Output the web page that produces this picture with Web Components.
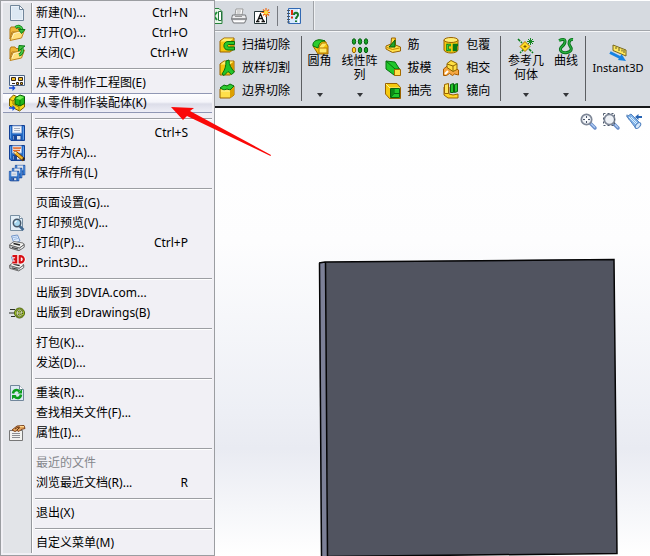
<!DOCTYPE html>
<html lang="zh-CN">
<head>
<meta charset="utf-8">
<title>文件菜单</title>
<style>
html, body { margin: 0; height: 100%; }
body { font: 12px/20px "Noto Sans", "Noto Sans CJK SC", sans-serif; color: #000; overflow: hidden; }
</style>
</head>
<body>
<cad-app></cad-app>
<script>
const save = '<path d="M.5.5h15v15H2l-1.500-1.500z" fill="#2269c4" stroke="#123f94"/><path d="M3.500 1h9v7h-9z" fill="#f4f6fa" stroke="#9eb6dc"/><path d="M5 3.500h6M5 5.500h6" stroke="#a8b0c0"/><path d="M4 10.500h8V15H4z" fill="#dfe4ea" stroke="#17479c"/><path d="M5 11h3v4H5z" fill="#17479c"/><path d="M1.500 1.500v12M14.500 1.500v13" stroke="#5f9de6"/>';
const printer = '<path d="M2.500 1l6-1 2.500 6-6 2.500z" fill="#dcebff" stroke="#7396c8"/><path d="M4 2.500l4-.5M5 4.500l4-1" stroke="#9dbbe2"/><path d="M.8 9.500L5 6.500l9 1.500 1.200 1.500-4.500 3.500-9.900-2z" fill="#f3f3f1" stroke="#777"/><path d="M.8 10v3L10 15.700l5.200-3.500V9.500L10.500 13z" fill="#c3c5c8" stroke="#666"/><path d="M4.500 8.500l6.500 1.500" stroke="#222" stroke-width="1.500"/><path d="M3 12.500l6 1.500" stroke="#333"/><path d="M11.500 13.500l3-2" stroke="#fff"/>';
const folder = '<path d="M1 4l1-2h4l1 1.500h6V7H3L1 14z" fill="#eeb63a" stroke="#b57a16"/><path d="M1 15.500L4 7.500l5-.500 6.500-2-3 8z" fill="#ffdf7b" stroke="#bf851d"/><path d="M3 13l2-4.500 8-2" stroke="#fff5c6" fill="none"/>';
const cube = '<path d="M1 4l4-3h10v11l-4 3H1z" fill="#f5c60c" stroke="#9a6200"/><path d="M1.500 4.500L5 1.500h9.500L11 4.500z" fill="#ffee70"/><path d="M11 4.500V15l3.500-3V2z" fill="#d99a00"/>';
const glass = '<path d="M10.500 10.500l4.500 4.500" stroke="#6a8fcb" stroke-width="3.500" stroke-linecap="round"/><path d="M11 10.700l4 4" stroke="#b8d2f6" stroke-width="1.200"/><circle cx="6.500" cy="6.500" r="5.200" fill="#eef1f6" stroke="#7e8797" stroke-width="1.700"/>';
const ICONS = {
  page: '<path d="M1.500.5h9l4 4v11h-13z" fill="#eaf1f8" stroke="#71869b"/><path d="M3 2h7v3h3v9H3z" fill="#dce8f3"/><path d="M10.500.5v4h4z" fill="#fff" stroke="#71869b"/>',
  open: folder + '<path d="M6.500 2.500C9 .500 12 1 13 4.500" fill="none" stroke="#0a7b17" stroke-width="3"/><path d="M6.500 2.500C9 .500 12 1 13 4.500" fill="none" stroke="#4cd34a" stroke-width="1.500"/><path d="M9.500 4.500h6.500l-3.500 4z" fill="#36ba37" stroke="#0a7b17"/>',
  close: folder + '<path d="M10 10c3-1 4-3 3-7" fill="none" stroke="#0a7b17" stroke-width="3"/><path d="M10 10c3-1 4-3 3-7" fill="none" stroke="#54d44d" stroke-width="1.300"/><path d="M9.500 6l.5-5.500 6 .500z" fill="#42c43b" stroke="#0a7b17"/>',
  drawing: '<path d="M.5.5h15v10H.5z" fill="#f8fbff" stroke="#4c6485"/><path d="M2.500 2.500h4v3h-4zM9.500 2.500h4v3h-4zM7.500 7.500h2v2h-2zM11.500 7.500h2v2h-2z" fill="#f2bf20" stroke="#38291a"/><path d="M3 8.500h3" stroke="#38291a"/><path d="M0 13h5" stroke="#154bd6" stroke-width="1.500"/><path d="M3.500 10v6l3-3z" fill="#154bd6"/>',
  assembly: '<path d="M.5 4l4-4 3 1.500v5l3 1.500 5-2v6l-5 4-10-5z" fill="#f7d51b" stroke="#775d00"/><path d="M1 4.500l3 1.500v3l6 3v3M4 6l3-3" fill="none" stroke="#9a7600"/><path d="M6 3l5-3 4.500 1.500v7L11 11 6 9z" fill="#22b51c" stroke="#075e06"/><path d="M6.500 3.300L11 .7l4 1.300-4 2.800z" fill="#78ef57"/><path d="M11 5v5.500" stroke="#087208"/><path d="M0 13h5" stroke="#154bd6" stroke-width="1.500"/><path d="M3.500 10v6l3-3z" fill="#154bd6"/>',
  save,
  saveas: save + '<path d="M4 3h8M4 5.500h7" stroke="#ed6a22" stroke-width="1.300"/><path d="M5 7l2.500-.5 8 7-1.500 2.500-8-6.500z" fill="#f5b826" stroke="#6e3c0b"/><path d="M5 7l2.500-.5-1.500 3z" fill="#fff0bd"/><path d="M13 14l1 2 2-2.500-1-1z" fill="#25222a"/>',
  saveall: '<g transform="translate(6 0) scale(.64)">' + save + '</g><g transform="translate(3 3) scale(.64)">' + save + '</g><g transform="translate(0 6) scale(.64)">' + save + '</g>',
  preview: '<path d="M1.500.5h9l3 3v12h-12z" fill="#e2eef7" stroke="#788fa3"/><path d="M10.500.5v3h3" fill="#fff" stroke="#788fa3"/><path d="M10.500 11l4 4" stroke="#426991" stroke-width="2.500"/><circle cx="8" cy="8" r="3.700" fill="#a6d7ef" stroke="#455768" stroke-width="1.500"/><path d="M6 8a2 2 0 0 1 2-2" fill="none" stroke="#fff"/>',
  printer,
  print3d: '<g transform="translate(0 1) scale(.97 .95)">' + printer + '</g><path d="M3.500 1.500h4v6h-4M4.500 4.500h3M10.500 1.500v6c6 .5 6-6.500 0-6z" fill="none" stroke="#fff" stroke-width="3.500"/><path d="M3.500 1.200h3.700v6.300H3.300M4.500 4.300h2.500M10.700 1.200v6.300c5.500.5 5.500-6.800 0-6.300z" fill="none" stroke="#d60e13" stroke-width="2.200"/>',
  edraw: '<path d="M1 4.500h5M0 8h5M2 11.500h4" stroke="#2b302a"/><circle cx="10.500" cy="8" r="5" fill="#a8c929" stroke="#49600e"/><path d="M8 8h5c0-4-5-4-5 0s4 3.500 5 1.500" fill="none" stroke="#46591a" stroke-width="2.200"/><path d="M8 8h5c0-4-5-4-5 0s4 3.500 5 1.500" fill="none" stroke="#f3f8c8"/>',
  reload: '<path d="M1.500.5h9l4 4v11h-13z" fill="#dce9f3" stroke="#71869b"/><path d="M10.500.5v4h4" fill="#fff" stroke="#71869b"/><path d="M4 8.500C4.500 5 8 4 10.500 6.500M12 9.500c-.5 4-4.500 4.500-6.500 2" fill="none" stroke="#0b9e1c" stroke-width="2.500"/><path d="M8.500 8.500H13V4zM7.500 10H3v4.500z" fill="#0b9e1c"/>',
  props: '<path d="M.5 5.500h13v10H.5z" fill="#f2f2ef" stroke="#777"/><path d="M3 8.500h8M3 10.500h8M3 12.500h8" stroke="#8b8d91"/><path d="M3 5l5-4 7-.5 1 3-4 1-2 2-2-1-2 1z" fill="#e6a65c" stroke="#7b421c"/><path d="M6 4l3-2 2 1M8 5l2-2" fill="none" stroke="#633113"/><path d="M11 1.500h4" stroke="#ffda92"/>',
  excel: '<path d="M1 .5h10l3 3v12H1z" fill="#e6f6e8" stroke="#26813a"/><path d="M10.500 3.500h3v9h-3z" fill="#fff" stroke="#23733a"/><path d="M3 4l6 8M9 4l-6 8" stroke="#1b8f35" stroke-width="2"/>',
  printPlain: '<path d="M4 7L5 1h7l-1 6z" fill="#fff" stroke="#999"/><path d="M6 3h4M5.500 5h4" stroke="#aaa"/><path d="M1.500 7h13l1 4-2 4h-11l-2-4z" fill="#eeeef0" stroke="#77797c"/><path d="M1 11h14" stroke="#77797c" stroke-width="1.500"/><path d="M4 8.500h7" stroke="#999"/><path d="M3 13.500h10" stroke="#fff"/>',
  note: '<path d="M.5 3.500h12v12H.5z" fill="#fff" stroke="#26373a"/><path d="M2 13.500h3.500M7.500 13.500H11M3.500 13l3-7 3 7M5 10.500h4" fill="none" stroke="#111" stroke-width="1.300"/><path d="M12 0v9M7.500 4.500H16M9 1.500l6 6M15 1.500l-6 6" stroke="#ed6c17" stroke-width="1.200"/><circle cx="12" cy="4.500" r="2" fill="#ffe03f"/>',
  help: '<path d="M2.500.5h12v15h-12z" fill="#d8eafe" stroke="#3269b3"/><path d="M12.500 1v14" stroke="#fff"/><path d="M1 2.500h3M1 5.500h3M1 8.500h3M1 11.500h3M1 14h3" stroke="#4c545d"/><path d="M6 2v5M6 8.500v2" stroke="#e32c13" stroke-width="2"/><path d="M8 7c0-3 4-3 4 0 0 2-2 1.500-2 4M10 12.500v1.500" fill="none" stroke="#17772a" stroke-width="2"/>',
  sweep: cube + '<path d="M15.500 4.500H9c-5.500 0-5.500 8.500 0 8.500h6.500v-3h-5.500c-2 0-2-2.500 0-2.500h5.500z" fill="#29c92c" stroke="#08700e"/>',
  loft: cube + '<path d="M7 1l3-1c0 5 2 8 5.500 12l-3 2.500-3.500-3-4 4-2-1.500c3-4 4-8 4-13z" fill="#22c42a" stroke="#08700e"/>',
  boundary: '<path d="M1 6l4-3h10v9l-4 3H1z" fill="#ffe04a" stroke="#9a6200"/><path d="M11 7v8l4-3V4z" fill="#dda000"/><path d="M1 5l4-3 3 1 3-2 4 2-4 4-3-1-3 1z" fill="#2dcc30" stroke="#08700e"/><path d="M2 8h9" stroke="#fff39a"/>',
  fillet: '<path d="M1 8l5-6 7 1 3 5v8H6z" fill="#f6c50b" stroke="#9a6200"/><path d="M7 15V9l3-4h5M7 10h8v5H7" fill="#ffe867" stroke="#bb7c00"/><path d="M1 8c-1-5 5-8 12-5-4 0-6 2-7 7z" fill="#2ccc2d" stroke="#08700e"/>',
  pattern: '<g fill="#16a524" stroke="#065e11"><ellipse cx="2" cy="3.500" rx="1.700" ry="2.800"/><ellipse cx="8" cy="3.500" rx="1.700" ry="2.800"/><ellipse cx="14" cy="3.500" rx="1.700" ry="2.800"/><ellipse cx="8" cy="12" rx="1.700" ry="2.800"/><ellipse cx="14" cy="12" rx="1.700" ry="2.800"/></g><ellipse cx="2" cy="12" rx="1.700" ry="2.800" fill="#ffd62a" stroke="#9b6400"/>',
  rib: '<path d="M6.500 1h4v7l5 2v4l-8 1.500L1 12V9l5-2z" fill="#ffe04a" stroke="#9a6200"/><path d="M2 10.500l5.500 2 7-1.500M10 1v8" stroke="#c88600" fill="none"/><path d="M10 3v7H4z" fill="#21a82b" stroke="#075c0e"/>',
  draft: '<path d="M1 1l9 1 5 8v5h-6L1 9z" fill="#20c82b" stroke="#08700e"/><path d="M1 1l9 8v6M10 9h5" fill="none" stroke="#08700e"/><path d="M9.500 9.500h6v6h-6z" fill="#ffe04a" stroke="#a66b00"/>',
  shell: '<path d="M.5.500h11.500l3.500 4v11H4.500L.5 11z" fill="#f5c90e" stroke="#9a6200"/><path d="M1 1l4 4h10" stroke="#fff392" fill="none"/><path d="M5.500 5.500h9v9h-9z" fill="#21c92c" stroke="#07620e"/><path d="M6 14l3-3.500h5.500M9 10.500V6" stroke="#08670f" fill="none"/><path d="M6 6h3v4.500L6 14z" fill="#0a8b16"/>',
  wrap: '<path d="M1 3v10c1 4 13 4 14 0V3z" fill="#f5c90e" stroke="#9a6200"/><ellipse cx="8" cy="3" rx="7" ry="2.500" fill="#ffed72" stroke="#9a6200"/><path d="M8 8H4.500v5H8M15 8h-4v5h2V9" fill="none" stroke="#0a7915" stroke-width="2.500"/><path d="M8 8H4.500v5H8" fill="none" stroke="#38d33c"/>',
  intersect: '<path d="M.5 9l5-4 10 5v5l-4-1-2 1.500-3-2-3 2h-3z" fill="#f5a642" stroke="#a95b00"/><path d="M4 3.500l4-3 6 3v6l-4 2-6-4z" fill="#ffdf43" stroke="#8d6500"/><path d="M4 4l6 2v5M10 6l4-2" fill="none" stroke="#8d6500"/><path d="M2 14l3-3" stroke="#fff" stroke-width="2"/>',
  mirror: '<path d="M1 4h5v7l4 1 5-1v4H5l-4-3z" fill="#ffd724" stroke="#9a6200"/><path d="M1.500 1.500l4-1v10h-4z" fill="#ffe85b" stroke="#9a6200"/><path d="M7.500 1.500l3-1v9h-3zM11.500 1.500l3-1v8l-3 1z" fill="#21c32b" stroke="#07620e"/>',
  reference: '<path d="M0 1l4 4M11 11l4 4M6 11l-4 4" stroke="#087c18" stroke-width="1.500" stroke-dasharray="3 1"/><path d="M7 3.500l5 5-5 5-5-5z" fill="#ffdc24" stroke="#ad7200"/><path d="M7 7v3M5.500 8.500h3" stroke="#7a5500"/><path d="M12.500 0v7M9 3.500h7M10 1l5 5M15 1l-5 5" stroke="#158522"/>',
  curve: '<path d="M1 2.500C9-1 8 5 4 8.500s0 7 5 6 5-4 3-6.500-1-7 3-6.500" fill="none" stroke="#08701b" stroke-width="3"/><path d="M1 2.500C9-1 8 5 4 8.500s0 7 5 6 5-4 3-6.500-1-7 3-6.500" fill="none" stroke="#2cb442" stroke-width="1.200"/>',
  instant: '<path d="M3 0l13 5v6L3 5.500z" fill="#ffe95f" stroke="#77671c"/><path d="M6 2v2M9 3v3M12 4.500v2M14 5v3" stroke="#5f5723"/><path d="M0 7.500l10 5" stroke="#1483e5" stroke-width="3"/><path d="M11.500 9l4.500 7-8-1z" fill="#1483e5"/>',
  fit: glass + '<path d="M6.500 3v7M3 6.500h7" stroke="#485468"/><path d="M5 5h3v3H5z" fill="#fff"/>',
  area: glass + '<path d="M.5.5h11v12H.5z" fill="none" stroke="#505d70" stroke-dasharray="2 2"/>',
  previous: '<path d="M1 1l3 5-1 1-3-4z" fill="#7a9ac1"/><path d="M1 3.500l4-2.500 9 9-4 5.500z" fill="#80b2e8" stroke="#5585c2"/><path d="M3 4l8 8M5 4l7 7" stroke="#d9efff"/><ellipse cx="12" cy="12.500" rx="2" ry="3.500" transform="rotate(40 12 12.500)" fill="#d5e8fb" stroke="#5585c2"/><path d="M11 4h5" stroke="#2865b4" stroke-width="2"/><path d="M12.500 1v6L9 4z" fill="#2865b4"/>'
};

function define(name, css, html, setup) {
  const template = document.createElement('template');
  template.innerHTML = '<style>' + css + '</style>' + html;
  customElements.define(name, class extends HTMLElement {
    connectedCallback() {
      if (this.shadowRoot) return;
      const root = this.attachShadow({ mode: 'open' });
      root.append(template.content.cloneNode(true));
      if (setup) setup(this, root);
    }
  });
}
const reset = 'button{font:inherit;color:inherit;background:none;border:0;margin:0;padding:0;text-align:left;white-space:nowrap}';

define('ui-icon', ':host{display:block;flex:none;width:16px;height:16px}svg{display:block;overflow:visible}',
  '<svg width="16" height="16" viewBox="0 0 16 16" aria-hidden="true"></svg>',
  (host, root) => { root.querySelector('svg').innerHTML = ICONS[host.getAttribute('name')] || ''; });

define('menu-row', reset + `
:host{display:block}
button{display:grid;grid-template-columns:33px 1fr auto;align-items:center;width:100%;height:20px;padding-right:24px;box-sizing:border-box}
ui-icon{margin-left:6px}
button:disabled{color:#85878c}
:host([active]) button{background:linear-gradient(#fff,#f4f4fa 45%,#dcdde9 55%,#f0f0f7);box-shadow:inset 0 1px #9097b4,inset 0 -1px #9097b4}`,
  '<button role="menuitem"><span class="icon"></span><span><slot></slot></span><span class="key"></span></button>',
  (host, root) => {
    const name = host.getAttribute('icon');
    if (name) root.querySelector('.icon').innerHTML = '<ui-icon name="' + name + '"></ui-icon>';
    root.querySelector('.key').textContent = host.getAttribute('key') || '';
    root.querySelector('button').disabled = host.hasAttribute('disabled');
  });

define('menu-line', ':host{display:block;height:10px;padding:5px 0 0 32px;box-sizing:border-box}hr{margin:0;border:0;height:1px;background:#9c9ea2;border-bottom:1px solid #fff}', '<hr>');

define('file-menu', `
:host{display:block;flex:none;width:215px;box-sizing:border-box;padding:2px;border:1px solid #9b9da1;background:#f1f0f5;align-self:flex-start}
nav{background:linear-gradient(90deg,#e2e4e8 28px,#96989d 28px,#96989d 29px,#fff 29px,#fff 30px,#f1f0f5 30px)}`,
  `<nav role="menu" aria-label="文件">
<menu-row icon="page" key="Ctrl+N">新建(N)...</menu-row><menu-row icon="open" key="Ctrl+O">打开(O)...</menu-row><menu-row icon="close" key="Ctrl+W">关闭(C)</menu-row><menu-line></menu-line>
<menu-row icon="drawing">从零件制作工程图(E)</menu-row><menu-row icon="assembly" active>从零件制作装配体(K)</menu-row><menu-line></menu-line>
<menu-row icon="save" key="Ctrl+S">保存(S)</menu-row><menu-row icon="saveas">另存为(A)...</menu-row><menu-row icon="saveall">保存所有(L)</menu-row><menu-line></menu-line>
<menu-row>页面设置(G)...</menu-row><menu-row icon="preview">打印预览(V)...</menu-row><menu-row icon="printer" key="Ctrl+P">打印(P)...</menu-row><menu-row icon="print3d">Print3D...</menu-row><menu-line></menu-line>
<menu-row>出版到 3DVIA.com...</menu-row><menu-row icon="edraw">出版到 eDrawings(B)</menu-row><menu-line></menu-line>
<menu-row>打包(K)...</menu-row><menu-row>发送(D)...</menu-row><menu-line></menu-line>
<menu-row icon="reload">重装(R)...</menu-row><menu-row>查找相关文件(F)...</menu-row><menu-row icon="props">属性(I)...</menu-row><menu-line></menu-line>
<menu-row disabled>最近的文件</menu-row><menu-row key="R">浏览最近文档(R)...</menu-row><menu-line></menu-line>
<menu-row>退出(X)</menu-row><menu-line></menu-line><menu-row>自定义菜单(M)</menu-row></nav>`);

define('quick-bar', reset + `
:host{display:flex;height:31px;box-sizing:border-box;border-top:1px solid #fff;border-bottom:1px solid #a3a6ab;background:#d6dae0;overflow:hidden}
.tools{display:flex;align-items:center;gap:7px;padding-right:11px;margin-left:-7px;border-right:1px solid #9fa2a7;box-shadow:1px 0 #eef0f3}
i{width:1px;height:20px;background:#777a80;margin:0 1px 0 0}`,
  '<div class="tools"><button aria-label="表格"><ui-icon name="excel"></ui-icon></button><button aria-label="打印"><ui-icon name="printPlain"></ui-icon></button><button aria-label="注释"><ui-icon name="note"></ui-icon></button><i></i><button aria-label="帮助"><ui-icon name="help"></ui-icon></button></div>');

define('tool-button', reset + `
:host{display:block}
button{display:flex;align-items:center;gap:7px;height:23px}
:host([big]) button{flex-direction:column;gap:0;height:65px;width:100%;padding-top:2px;line-height:14px;text-align:center;white-space:normal}
:host([menu]) button::after{content:"";margin-top:auto;margin-bottom:4px;border:3px solid transparent;border-top:4px solid #34363a;border-bottom:0}
:host([plain]) button{font-size:11px;padding-top:9px}`,
  '<button><ui-icon></ui-icon><span><slot></slot></span></button>',
  (host, root) => {
    const icon = document.createElement('ui-icon');
    icon.setAttribute('name', host.getAttribute('icon'));
    root.querySelector('ui-icon').replaceWith(icon);
  });

define('ribbon-bar', `
:host{display:flex;height:77px;box-sizing:border-box;padding-top:4px;background:#d6dae0;border-top:1px solid #f5f6f8;border-bottom:2px solid #17181a;overflow:hidden;align-items:flex-start}
.stack{display:flex;flex-direction:column;height:69px;margin-top:-3px}
.first{margin-left:4px;width:82px}.mid{width:59px;margin-left:3px}.last{width:57px}
.rule{flex:none;width:1px;height:65px;background:#5c5e62}
.fillet{width:36px}.pattern{width:44px}.ref{width:42px;margin-left:4px}.curve{width:38px}.instant{width:64px}
.fillet,.pattern,.ref,.curve,.instant{flex:none}`,
  `<div class="stack first"><tool-button icon="sweep">扫描切除</tool-button><tool-button icon="loft">放样切割</tool-button><tool-button icon="boundary">边界切除</tool-button></div><span class="rule"></span>
<tool-button class="fillet" big menu icon="fillet">圆角</tool-button><tool-button class="pattern" big menu icon="pattern">线性阵<br>列</tool-button>
<div class="stack mid"><tool-button icon="rib">筋</tool-button><tool-button icon="draft">拔模</tool-button><tool-button icon="shell">抽壳</tool-button></div>
<div class="stack last"><tool-button icon="wrap">包覆</tool-button><tool-button icon="intersect">相交</tool-button><tool-button icon="mirror">镜向</tool-button></div><span class="rule"></span>
<tool-button class="ref" big menu icon="reference">参考几<br>何体</tool-button><tool-button class="curve" big menu icon="curve">曲线</tool-button><span class="rule"></span><tool-button class="instant" big plain icon="instant">Instant3D</tool-button>`);

define('model-view', reset + `
:host{display:block;flex:1;min-height:0;position:relative;overflow:hidden;background:linear-gradient(#fff 0%,#fdfdfe 30%,#edeff5 68%,#e9ebf2 76%,#fff 100%)}
.scene{display:block;width:100%;height:auto}
.views{position:absolute;top:5px;right:8px;display:flex;gap:7px}`,
  `<svg class="scene" viewBox="0 0 435 448" role="img" aria-label="零件模型"><path d="M104 155l6-1 3 294h-7z" fill="#7c8097"/><path d="M110 154l289-3 3 294-289 4z" fill="#515460"/><path d="M104.500 155l2 294M110.500 154.500l2 294M104 155l6-1 289-2.500 3 294-289 3" fill="none" stroke="#050506" stroke-width="1.500"/></svg>
<div class="views"><button aria-label="整屏显示"><ui-icon name="fit"></ui-icon></button><button aria-label="局部放大"><ui-icon name="area"></ui-icon></button><button aria-label="上一视图"><ui-icon name="previous"></ui-icon></button></div>`);

define('pointer-arrow', ':host{position:absolute;left:171px;top:105px;pointer-events:none}svg{display:block}',
  '<svg width="101" height="53" viewBox="0 0 101 53" aria-hidden="true"><path d="M0 2l23 1-4 3 81 44-.5 1L16 11l-4 4z" fill="#fa0908"/></svg>');

define('cad-app', ':host{display:flex;height:100%;position:relative;background:#fff}main{display:flex;flex-direction:column;flex:1;min-width:0}',
  '<file-menu></file-menu><main><quick-bar></quick-bar><ribbon-bar></ribbon-bar><model-view></model-view></main><pointer-arrow></pointer-arrow>');
</script>
</body>
</html>
